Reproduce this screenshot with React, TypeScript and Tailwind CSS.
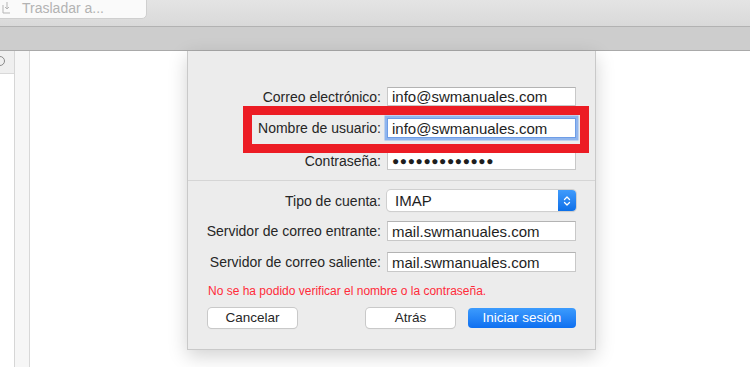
import React from 'react'

const font = { fontFamily: '"Liberation Sans", Arial, sans-serif' }

function Field({ value, focused }: { value: string; focused?: boolean }) {
  return (
    <div
      className={`w-[189px] h-full bg-white flex items-center px-[4px] text-[15px] leading-none text-[#1e1e1e] ${
        focused
          ? 'border border-[#6e9de6] shadow-[0_0_0_2.5px_#8fb5ee]'
          : 'border border-[#c8c8c8] border-t-[#b3b3b3]'
      }`}
    >
      {value}
    </div>
  )
}

function Row({ label, children, className = '' }: { label: string; children: React.ReactNode; className?: string }) {
  return (
    <div className={`flex items-center shrink-0 ${className}`}>
      <div className="w-[199px] pr-[6px] text-right text-[14px] leading-none text-[#262626] whitespace-nowrap">{label}</div>
      <div className="h-full flex items-center">{children}</div>
    </div>
  )
}

export default function App() {
  return (
    <div className="w-[750px] h-[367px] bg-white overflow-hidden flex flex-col" style={font}>
      {/* toolbar */}
      <div className="h-[27px] shrink-0 bg-gradient-to-b from-[#e4e4e4] to-[#d9d9d9] border-b border-[#b2b2b2] relative">
        <div className="absolute left-[-6px] top-[-6px] w-[153px] h-[25px] bg-[#fafafa] border border-[#cfcfcf] rounded-[5px] flex items-end pb-[3px] pl-[7px]">
          <svg width="10" height="13" viewBox="0 0 10 13" className="mr-[10px] mb-[1px]">
            <path d="M1 4v8h7" fill="none" stroke="#b5b5b5" strokeWidth="1" />
            <path d="M5 1v7M3 6l2 2 2-2" fill="none" stroke="#b5b5b5" strokeWidth="1" />
          </svg>
          <span className="text-[14px] text-[#b3b3b3] leading-none">Trasladar a...</span>
        </div>
      </div>
      {/* second bar */}
      <div className="h-[24px] shrink-0 bg-[#cdcdcd] border-b border-[#a9a9a9]" />
      {/* body */}
      <div className="flex flex-1">
        <div className="w-[15px] border-r border-[#d6d6d6] flex flex-col">
          <div className="h-[23px] bg-[#efefef] border-b border-[#d9d9d9] relative overflow-hidden">
            <div className="absolute left-[-5px] top-[5px] w-[10px] h-[10px] rounded-full border border-[#8a8a8a]" />
          </div>
          <div className="flex-1 bg-white" />
        </div>
        <div className="w-[15px] bg-[#f6f6f6] border-r border-[#d8d8d8]" />
        <div className="flex-1 bg-white relative">
          {/* sheet */}
          <div className="absolute left-[157px] top-0 w-[409px] h-[299px] bg-[#ececec] border-l border-r border-b border-[#c9c9c9] shadow-[0_6px_18px_rgba(0,0,0,0.18)] flex flex-col">
            <div className="pt-[36px] pb-[10px] border-b border-[#d5d5d5] flex flex-col relative">
              <Row label="Correo electrónico:" className="h-[19px]">
                <Field value="info@swmanuales.com" />
              </Row>
              <Row label="Nombre de usuario:" className="h-[20px] mt-[12px]">
                <Field value="info@swmanuales.com" focused />
              </Row>
              <Row label="Contraseña:" className="h-[19px] mt-[13px]">
                <div className="w-[189px] h-full bg-white border border-[#c8c8c8] border-t-[#b3b3b3] flex items-center px-[4px] text-[12px] leading-none tracking-[0.6px] text-[#1e1e1e]">
                  ●●●●●●●●●●●●●
                </div>
              </Row>
              {/* red annotation */}
              <div className="absolute left-[55px] top-[55px] w-[346px] h-[47px] border-[9px] border-[#ec1c24] pointer-events-none" />
            </div>
            <div className="pt-[9px] flex flex-col">
              <Row label="Tipo de cuenta:" className="h-[21px]">
                <div className="w-[189px] h-full bg-white rounded-[4px] shadow-[0_0_0_1px_#cfcfcf,0_1px_1px_rgba(0,0,0,0.15)] flex items-center">
                  <span className="flex-1 pl-[8px] text-[15px] leading-none text-[#1e1e1e]">IMAP</span>
                  <div className="w-[18px] h-full rounded-r-[4px] bg-gradient-to-b from-[#3f9bfc] to-[#0b6fe8] flex items-center justify-center">
                    <svg width="8" height="12" viewBox="0 0 8 12">
                      <path d="M1.5 4.5L4 2l2.5 2.5M1.5 7.5L4 10l2.5-2.5" fill="none" stroke="white" strokeWidth="1.3" strokeLinecap="round" strokeLinejoin="round" />
                    </svg>
                  </div>
                </div>
              </Row>
              <Row label="Servidor de correo entrante:" className="h-[20px] mt-[10px]">
                <Field value="mail.swmanuales.com" />
              </Row>
              <Row label="Servidor de correo saliente:" className="h-[20px] mt-[11px]">
                <Field value="mail.swmanuales.com" />
              </Row>
              <div className="pl-[20px] mt-[12px] text-[12px] text-[#ff2b3a] leading-[14px]">
                No se ha podido verificar el nombre o la contraseña.
              </div>
              <div className="flex items-center pl-[20px] pr-[19px] mt-[10px]">
                <button className="w-[89px] h-[20px] bg-white rounded-[4px] shadow-[0_0_0_1px_#c9c9c9,0_1px_1px_rgba(0,0,0,0.15)] text-[13.5px] leading-none text-[#262626]">
                  Cancelar
                </button>
                <div className="flex-1" />
                <button className="w-[89px] h-[20px] bg-white rounded-[4px] shadow-[0_0_0_1px_#c9c9c9,0_1px_1px_rgba(0,0,0,0.15)] text-[13.5px] leading-none text-[#262626]">
                  Atrás
                </button>
                <button className="ml-[13px] w-[108px] h-[20px] rounded-[4px] bg-gradient-to-b from-[#3c9bfd] to-[#0d6ff0] text-[13.5px] leading-none text-white">
                  Iniciar sesión
                </button>
              </div>
            </div>
          </div>
        </div>
      </div>
    </div>
  )
}
